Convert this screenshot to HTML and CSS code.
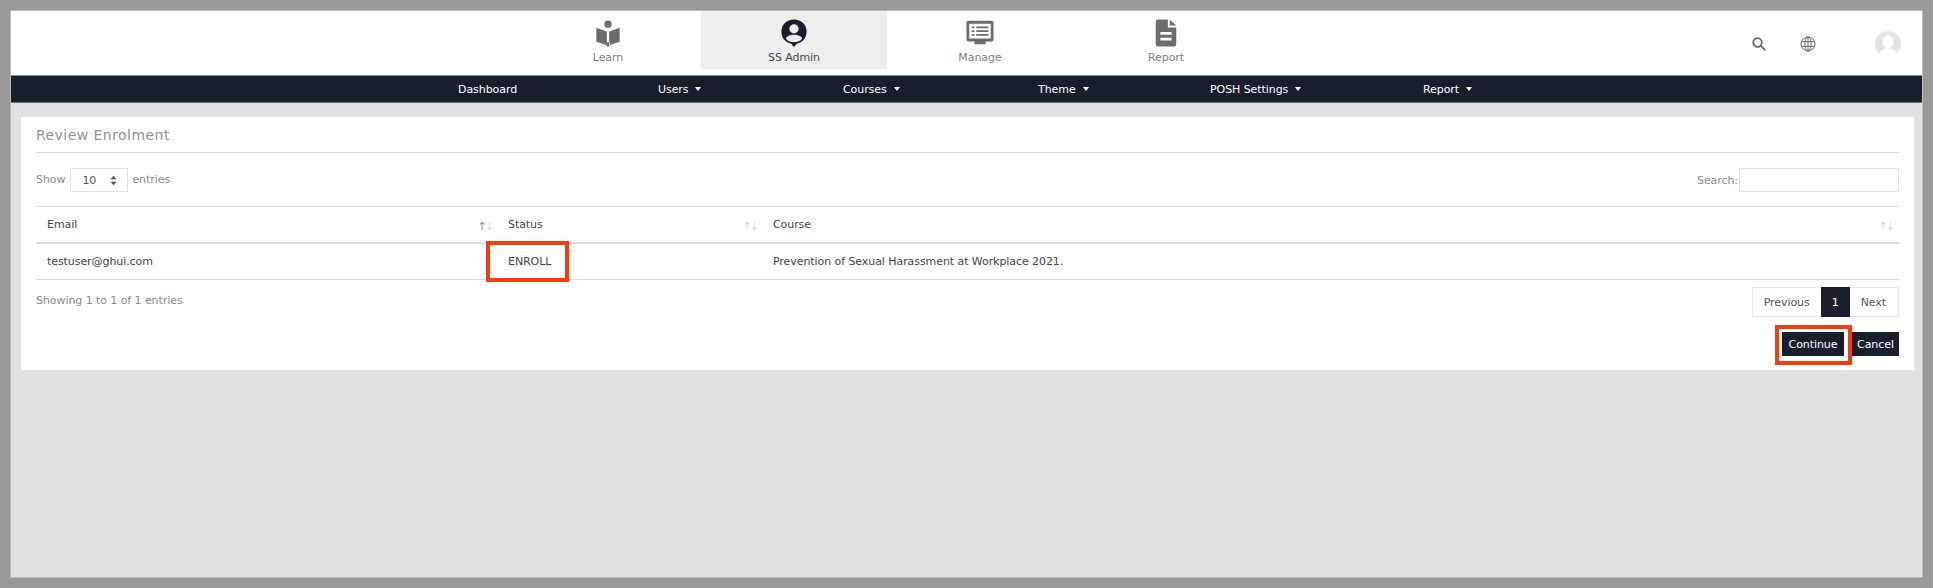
FILE: index.html
```html
<!DOCTYPE html>
<html lang="en">
<head>
    <meta charset="UTF-8">
    <title>Review Enrolment</title>
    <link rel="stylesheet" href="styles.css">
</head>
<body>
    <div class="frame">
        <div class="topbar">
            <div class="tabs">
                <div class="tab">
                    <svg class="tab-icon" viewBox="0 0 30 30"><circle cx="15" cy="5.500" r="4"/><path d="M2.500 9.500 L13.800 13.500 V28 L2.500 24.500 Z M27.500 9.500 L16.200 13.500 V28 L27.500 24.500 Z M13 25 H17 V28.500 L15 30 L13 28.500 Z"/></svg>
                    <span>Learn</span>
                </div>
                <div class="tab active">
                    <svg class="tab-icon" viewBox="0 0 30 30"><path fill-rule="evenodd" d="M15 0.500 C23 0.500 28.500 6 28.500 13.500 C28.500 20.500 24 25.500 18 26.500 L15 30 L12 26.500 C6 25.500 1.500 20.500 1.500 13.500 C1.500 6 7 0.500 15 0.500 Z M15 5.500 A5 5 0 1 0 15 15.500 A5 5 0 1 0 15 5.500 Z M15 17 C10 17 6.800 19 6.200 21 C8 23.800 11.300 25 15 25 C18.700 25 22 23.800 23.800 21 C23.200 19 20 17 15 17 Z"/></svg>
                    <span>SS Admin</span>
                </div>
                <div class="tab">
                    <svg class="tab-icon" viewBox="0 0 30 30"><path fill-rule="evenodd" d="M2.500 2 H27.500 A2 2 0 0 1 29.500 4 V22 A2 2 0 0 1 27.500 24 H21 V27 H9 V24 H2.500 A2 2 0 0 1 0.500 22 V4 A2 2 0 0 1 2.500 2 Z M3.500 5 V21 H26.500 V5 Z M6 8 H9 V10 H6 Z M11 8 H24 V10 H11 Z M6 12 H9 V14 H6 Z M11 12 H24 V14 H11 Z M6 16 H9 V18 H6 Z M11 16 H24 V18 H11 Z"/></svg>
                    <span>Manage</span>
                </div>
                <div class="tab">
                    <svg class="tab-icon" viewBox="0 0 30 30"><path fill-rule="evenodd" d="M7 0.500 H17 V9 H26 V27 A2.500 2.500 0 0 1 23.500 29.500 H6.500 A2.500 2.500 0 0 1 4 27 V3 A2.500 2.500 0 0 1 6.500 0.500 Z M19 0.500 L26 7 H19 Z M9 14 V17 H21 V14 Z M9 20 V23 H21 V20 Z"/></svg>
                    <span>Report</span>
                </div>
            </div>
            <div class="tools">
                <svg class="tool-icon search-icon" viewBox="0 0 14 14"><circle cx="5.500" cy="5.500" r="4.300"/><path d="M8.700 8.700 L13.300 13.300"/></svg>
                <svg class="tool-icon globe-icon" viewBox="0 0 16 16"><circle cx="8" cy="8" r="7"/><ellipse cx="8" cy="8" rx="3.200" ry="7"/><path d="M8 1 V15 M1.300 5.700 H14.700 M1.300 10.300 H14.700"/></svg>
                <svg class="avatar" viewBox="0 0 26 26"><defs><clipPath id="avatar-clip"><circle cx="13" cy="13" r="13"/></clipPath></defs><circle cx="13" cy="13" r="13" fill="#e4e4e4"/><g clip-path="url(#avatar-clip)" fill="#fff"><ellipse cx="13" cy="11" rx="5.500" ry="6.500"/><path d="M3 27 C4 19 9 17.500 13 17.500 C17 17.500 22 19 23 27 Z"/></g></svg>
            </div>
        </div>

        <div class="navbar">
            <a>Dashboard</a>
            <a class="caret">Users</a>
            <a class="caret">Courses</a>
            <a class="caret">Theme</a>
            <a class="caret">POSH Settings</a>
            <a class="caret">Report</a>
        </div>

        <div class="card">
            <h1 class="card-title">Review Enrolment</h1>

            <div class="table-controls">
                <label class="length-control"><span class="control-text">Show</span>
                    <span class="select-box">10
                        <svg class="select-arrows" viewBox="0 0 8 12"><path d="M4 0.500 L7.500 4.500 H0.500 Z M4 11.500 L0.500 7.500 H7.500 Z"/></svg>
                    </span>
                    <span class="control-text">entries</span>
                </label>
                <label class="search-control">Search:<input type="text" class="search-input"></label>
            </div>

            <table class="enrol-table">
                <colgroup>
                    <col class="col-email">
                    <col class="col-status">
                    <col>
                </colgroup>
                <thead>
                    <tr>
                        <th>Email<span class="sort"><b>↑</b>↓</span></th>
                        <th>Status<span class="sort">↑↓</span></th>
                        <th>Course<span class="sort">↑↓</span></th>
                    </tr>
                </thead>
                <tbody>
                    <tr>
                        <td>testuser@ghui.com</td>
                        <td class="status-cell">ENROLL<span class="mark mark-status"></span></td>
                        <td>Prevention of Sexual Harassment at Workplace 2021.</td>
                    </tr>
                </tbody>
            </table>

            <div class="table-footer">
                <div class="table-info">Showing 1 to 1 of 1 entries</div>
                <div class="pagination">
                    <a>Previous</a>
                    <a class="current">1</a>
                    <a class="next">Next</a>
                </div>
            </div>

            <div class="actions">
                <button class="btn btn-continue">Continue<span class="mark mark-continue"></span></button>
                <button class="btn">Cancel</button>
            </div>
        </div>
    </div>
</body>
</html>
```

FILE: styles.css
```css
* {
    box-sizing: border-box;
}

html,
body {
    margin: 0;
    height: 100%;
    overflow: hidden;
}

body {
    background: #999999;
    padding: 10px;
    font-family: "DejaVu Sans", Verdana, sans-serif;
    font-size: 11px;
    letter-spacing: -0.070px;
    color: #777;
}

.frame {
    height: 100%;
    background: #e2e2e2;
    border: 1px solid #bdbdbd;
}

/* top bar */
.topbar {
    height: 64px;
    background: #fff;
    position: relative;
    display: flex;
    justify-content: flex-end;
}

.tabs {
    display: flex;
    position: absolute;
    left: 504px;
    top: 0;
}

.tab {
    width: 186px;
    height: 58px;
    display: flex;
    flex-direction: column;
    align-items: center;
    padding-top: 8px;
    color: #808080;
}

.tab span {
    margin-top: 4px;
    font-size: 11px;
    line-height: 14px;
}

.tab-icon {
    width: 28px;
    height: 28px;
    fill: #6d6d6d;
}

.tab.active {
    background: #eeeeee;
    color: #3f4650;
}

.tab.active .tab-icon {
    fill: #181f2a;
}

.tools {
    display: flex;
    align-items: center;
    height: 66px;
    padding-right: 21px;
}

.tool-icon {
    fill: none;
    stroke: #666;
}

.search-icon {
    width: 14px;
    height: 14px;
    stroke-width: 1.700;
    margin-right: 34px;
}

.globe-icon {
    width: 16px;
    height: 16px;
    stroke-width: 1;
    margin-right: 59px;
}

.avatar {
    width: 26px;
    height: 26px;
}

/* dark menu */
.navbar {
    height: 28px;
    background: #181f2a;
    border-top: 1px solid #8a8f96;
    border-bottom: 1px solid #6f747b;
    display: grid;
    grid-template-columns: 200px 185px 195px 172px 213px auto;
    align-items: center;
    padding-left: 447px;
    color: #fff;
    font-size: 11px;
}

.caret::after {
    content: "";
    display: inline-block;
    margin-left: 7px;
    vertical-align: 2px;
    border-top: 4px solid #fff;
    border-left: 3.500px solid transparent;
    border-right: 3.500px solid transparent;
}

/* card */
.card {
    margin: 14px 8px 0 10px;
    height: 253px;
    background: #fff;
    padding: 0 15px;
}

.card-title {
    margin: 0;
    height: 36px;
    line-height: 37px;
    font-size: 14px;
    font-weight: normal;
    letter-spacing: 0.450px;
    color: #929292;
    border-bottom: 1px solid #dcdcdc;
}

.table-controls {
    display: flex;
    justify-content: space-between;
    align-items: center;
    height: 24px;
    margin-top: 15px;
    margin-bottom: 14px;
}

.length-control,
.search-control {
    display: flex;
    align-items: center;
    color: #8a8a8a;
}

.control-text {
    margin-top: -2px;
}

.select-box {
    width: 58px;
    height: 24px;
    margin: 0 4px 0 5px;
    border: 1px solid #dee2e6;
    display: flex;
    align-items: center;
    justify-content: space-between;
    padding: 0 10px 0 11px;
    color: #555;
}

.select-arrows {
    width: 7px;
    height: 11px;
    fill: #555;
}

.search-input {
    width: 160px;
    height: 24px;
    margin-left: 1px;
    border: 1px solid #dee2e6;
    background: #fff;
}

/* table */
.enrol-table {
    width: 100%;
    border-collapse: collapse;
    table-layout: fixed;
    color: #444;
    border-top: 1px solid #dcdcdc;
}

.col-email {
    width: 462px;
}

.col-status {
    width: 265px;
}

.enrol-table th {
    height: 36px;
    padding: 0 10px;
    text-align: left;
    font-weight: normal;
    position: relative;
    border-bottom: 2px solid #dcdcdc;
}

.enrol-table td {
    height: 37px;
    padding: 0 10px;
    border-bottom: 1px solid #dcdcdc;
}

.enrol-table th:first-child,
.enrol-table td:first-child {
    padding-left: 11px;
}

.status-cell {
    position: relative;
}

.sort {
    position: absolute;
    right: 6px;
    top: 13px;
    font-size: 11px;
    line-height: 14px;
    color: #d4d7dd;
    letter-spacing: -2px;
}

.sort b {
    font-weight: normal;
    color: #8a8f96;
}

.mark {
    position: absolute;
    border: 4px solid #f43c0c;
    pointer-events: none;
}

.mark-status {
    left: -12px;
    top: -3px;
    width: 83px;
    height: 41px;
}

.mark-continue {
    left: -7px;
    top: -7px;
    width: 77px;
    height: 40px;
}

.table-footer {
    display: flex;
    justify-content: space-between;
    align-items: flex-start;
    margin-top: 7px;
}

.table-info {
    padding-top: 7px;
    color: #8a8a8a;
}

.pagination {
    display: flex;
    height: 30px;
    border: 1px solid #e6e8ec;
    align-items: stretch;
    color: #555;
}

.pagination a {
    display: flex;
    align-items: center;
    padding: 0 11px;
}

.pagination .next {
    padding-right: 12px;
}

.pagination .current {
    background: #181f2a;
    color: #fff;
    margin: -1px 0;
    width: 29px;
    padding: 0;
    justify-content: center;
}

.actions {
    display: flex;
    justify-content: flex-end;
    gap: 8px;
    margin-top: 15px;
}

.btn {
    height: 24px;
    border: 0;
    padding: 0;
    width: 47px;
    background: #181f2a;
    color: #fff;
    font-family: inherit;
    font-size: 11px;
    letter-spacing: inherit;
    position: relative;
}

.btn-continue {
    width: 62px;
}

.btn-continue .mark {
    left: -7px;
    width: 77px;
}
```
